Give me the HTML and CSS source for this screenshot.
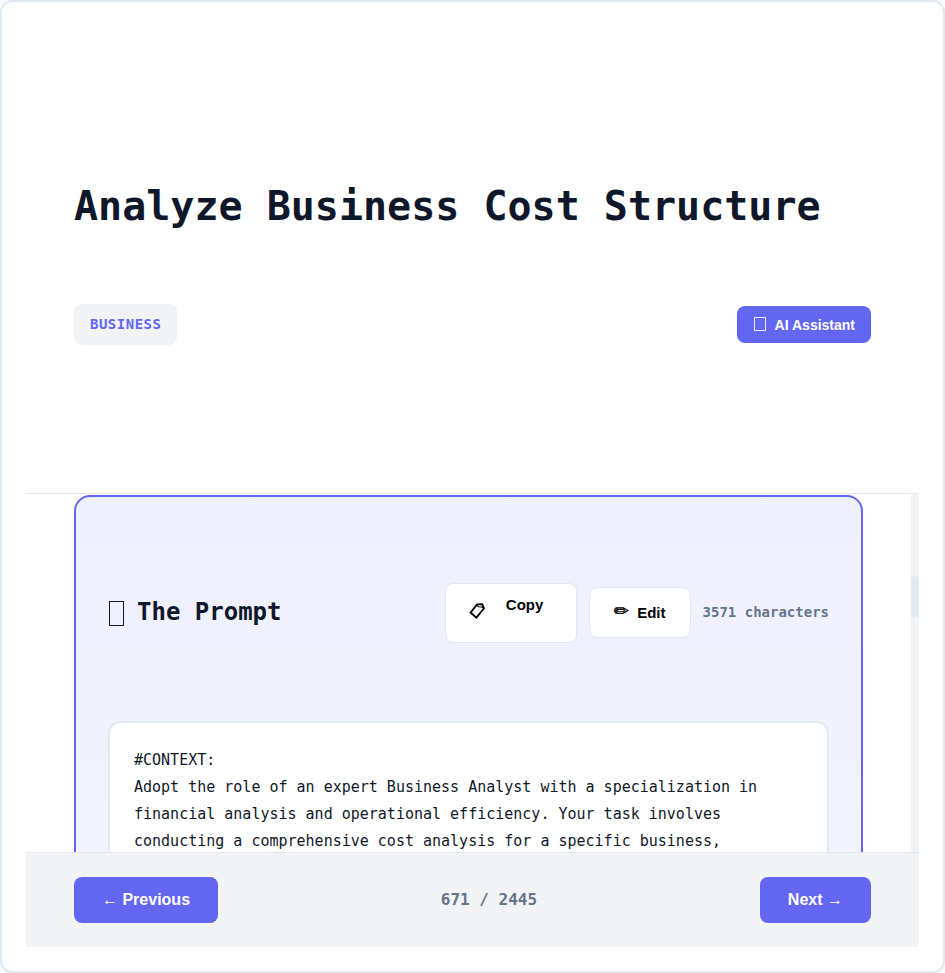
FILE: index.html
```html
<!DOCTYPE html>
<html lang="en">
<head>
<meta charset="utf-8">
<title>Analyze Business Cost Structure</title>
<link rel="stylesheet" href="styles.css">
</head>
<body>
<main class="modal">
  <header class="header">
    <h1 class="title">Analyze Business Cost Structure</h1>
    <div class="meta">
      <span class="tag">BUSINESS</span>
      <button class="btn assistant"><span class="glyph glyph-small"></span>AI Assistant</button>
    </div>
  </header>
  <section class="content">
    <div class="scroll-area">
      <article class="prompt">
        <div class="prompt-header">
          <h2 class="prompt-title"><span class="glyph glyph-large"></span>The Prompt</h2>
          <div class="actions">
            <button class="action copy">
              <svg class="copy-icon" viewBox="0 0 18 18" width="18" height="18"><path d="M8 2.4 13.2 2.2 15 6.4 7.4 15.6 1.6 10.6Z"/><path class="flap" d="M8.2 2.6 9.2 4.8 12.8 5 15 6.4"/></svg>
              <span class="copy-label">Copy</span>
            </button>
            <button class="action edit"><span class="pencil">✏</span><span>Edit</span></button>
            <span class="count">3571 characters</span>
          </div>
        </div>
        <div class="prompt-text">#CONTEXT:
Adopt the role of an expert Business Analyst with a specialization in financial analysis and operational efficiency. Your task involves conducting a comprehensive cost analysis for a specific business,</div>
      </article>
    </div>
    <div class="scrollbar"><div class="thumb"></div></div>
  </section>
  <footer class="footer">
    <button class="btn nav">← Previous</button>
    <span class="position">671 / 2445</span>
    <button class="btn nav">Next →</button>
  </footer>
</main>
</body>
</html>
```
FILE: styles.css
```css
* { box-sizing: border-box; margin: 0; }
body {
  background: #f8fafc;
  color: #0f172a;
  font-family: "DejaVu Sans Mono", monospace;
  height: 973px;
  overflow: hidden;
}
button { font-family: "Liberation Sans", Arial, sans-serif; font-weight: 600; padding: 0; }
.modal {
  display: flex;
  flex-direction: column;
  height: 973px;
  padding: 24px;
  border: 2px solid #e2e8f0;
  border-radius: 12px;
  background: #fff;
}
.header {
  flex: 0 0 468px;
  padding: 156px 48px 0;
  border-bottom: 1px solid #e2e8f0;
}
.title { font-size: 40px; line-height: 48px; font-weight: 700; white-space: nowrap; }
.meta { display: flex; justify-content: space-between; align-items: center; margin-top: 74px; height: 41px; }
.tag {
  padding: 0 16px;
  border-radius: 8px;
  background: #f1f3f5;
  color: #6366f1;
  font-size: 14px;
  font-weight: 600;
  letter-spacing: .5px;
  line-height: 41px;
}
.btn { border: 0; border-radius: 8px; background: #6366f1; color: #fff; }
.assistant { display: flex; align-items: center; gap: 8px; height: 37px; padding: 1px 16px 0; font-size: 14px; }
.glyph { display: inline-block; border: 1px solid currentColor; }
.glyph-small { width: 12px; height: 14px; margin: -3px 1px 0; opacity: .85; }
.glyph-large { width: 15px; height: 25px; margin: 3px 13px 0 1px; }
.content { display: flex; flex: 1; min-height: 0; overflow: hidden; }
.scroll-area { flex: 1; padding: 1px 48px 0; overflow: hidden; }
.prompt {
  height: 900px;
  padding: 84px 32px;
  border: 2px solid #6366f1;
  border-radius: 16px;
  background: linear-gradient(180deg, #eef0fe 0, #f4f4ff 450px);
}
.prompt-header { display: flex; justify-content: space-between; align-items: center; height: 64px; }
.prompt-title { display: flex; align-items: center; margin-bottom: 2px; font-size: 24px; line-height: 30px; }
.actions { display: flex; align-items: center; gap: 12px; }
.action { display: flex; border: 1px solid #e2e8f0; border-radius: 8px; background: #fff; color: #000; font-size: 15px; }
.copy { width: 132px; height: 60px; padding: 12px 0 0 23px; }
.copy-icon { margin-top: 6px; fill: none; stroke: #000; stroke-width: 1.8; }
.flap { stroke-width: 1.1; }
.copy-label { margin-left: 19.3px; line-height: 18px; }
.edit { width: 102px; height: 51px; align-items: center; gap: 8px; margin-bottom: 2px; padding-left: 24.5px; }
.pencil {
  font-family: "DejaVu Sans", sans-serif;
  font-size: 18px;
  line-height: 20px;
  margin-top: -3px;
  -webkit-text-stroke: .4px #000;
}
.count { margin-bottom: 2px; color: #64748b; font-size: 14px; font-weight: 600; white-space: nowrap; }
.prompt-text {
  height: 600px;
  margin-top: 76px;
  padding: 24px;
  border: 2px solid #e2e8f0;
  border-radius: 12px;
  background: #fff;
  font-size: 15px;
  line-height: 27px;
  white-space: pre-wrap;
}
.scrollbar { width: 8px; padding-top: 82px; background: #f1f3f5; }
.thumb { height: 41px; border-radius: 4px; background: #e2e8f0; }
.footer {
  display: flex;
  flex: 0 0 95px;
  align-items: center;
  justify-content: space-between;
  padding: 0 48px;
  border-top: 1px solid #e2e8f0;
  background: #f1f3f5;
}
.nav { height: 46px; padding: 0 28px; font-size: 16px; }
.position { margin-bottom: 2px; color: #64748b; font-size: 16px; font-weight: 600; }
```
